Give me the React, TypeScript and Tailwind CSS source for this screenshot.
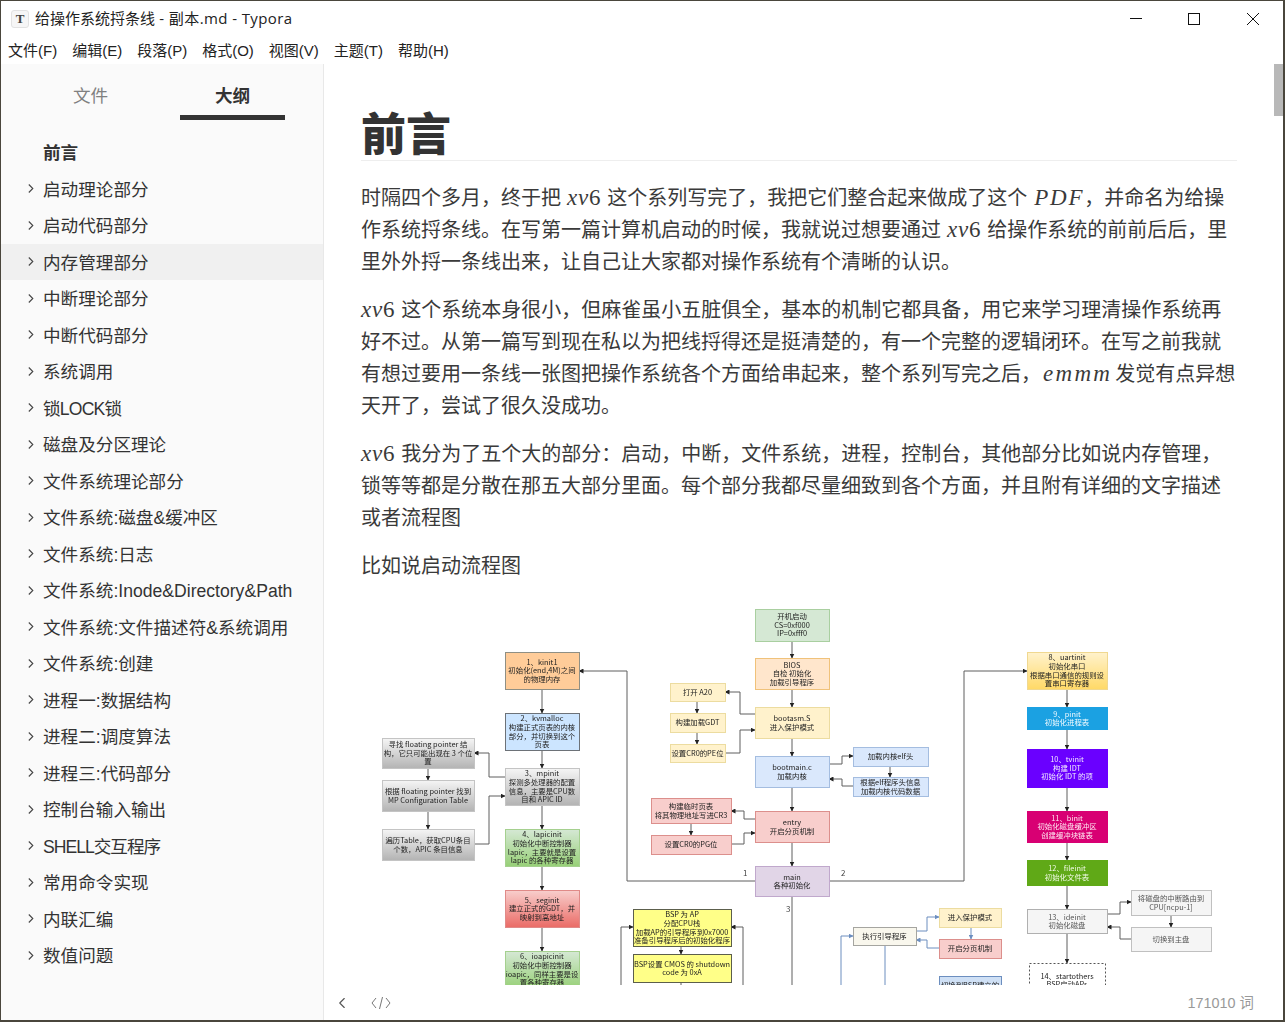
import { ChevronLeft } from 'lucide-react';

const OUTLINE = [
  '启动理论部分',
  '启动代码部分',
  '内存管理部分',
  '中断理论部分',
  '中断代码部分',
  '系统调用',
  '锁LOCK锁',
  '磁盘及分区理论',
  '文件系统理论部分',
  '文件系统:磁盘&缓冲区',
  '文件系统:日志',
  '文件系统:Inode&Directory&Path',
  '文件系统:文件描述符&系统调用',
  '文件系统:创建',
  '进程一:数据结构',
  '进程二:调度算法',
  '进程三:代码部分',
  '控制台输入输出',
  'SHELL交互程序',
  '常用命令实现',
  '内联汇编',
  '数值问题',
];

// capitals run narrower in the reference font
const TIGHT: Record<string, string> = {
  '锁LOCK锁': 'tracking-[-0.8px]',
  SHELL交互程序: 'tracking-[-1px]',
};

const MENU = ['文件(F)', '编辑(E)', '段落(P)', '格式(O)', '视图(V)', '主题(T)', '帮助(H)'];

type Box = {
  x: number;
  y: number;
  w: number;
  h: number;
  fill: string;
  stroke: string;
  lines: string[];
  color?: string;
  dashed?: boolean;
};

const BOXES: Box[] = [
  { x: 755, y: 609, w: 74, h: 32, fill: '#d5e8d4', stroke: '#a9cfa0', lines: ['开机启动', 'CS=0xf000', 'IP=0xfff0'] },
  { x: 755, y: 658, w: 74, h: 31, fill: '#ffe6cc', stroke: '#f0c27a', lines: ['BIOS', '自检 初始化', '加载引导程序'] },
  { x: 755, y: 707, w: 74, h: 31, fill: '#fff2cc', stroke: '#ecdca0', lines: ['bootasm.S', '进入保护模式'] },
  { x: 755, y: 756, w: 74, h: 31, fill: '#dae8fc', stroke: '#a4bde0', lines: ['bootmain.c', '加载内核'] },
  { x: 755, y: 811, w: 74, h: 31, fill: '#f8cecc', stroke: '#dc8f8c', lines: ['entry', '开启分页机制'] },
  { x: 755, y: 866, w: 74, h: 30, fill: '#e1d5e7', stroke: '#c0a8cc', lines: ['main', '各种初始化'] },
  { x: 670, y: 683, w: 55, h: 18, fill: '#fff2cc', stroke: '#ecdca0', lines: ['打开 A20'] },
  { x: 670, y: 713, w: 55, h: 19, fill: '#fff2cc', stroke: '#ecdca0', lines: ['构建加载GDT'] },
  { x: 670, y: 744, w: 55, h: 18, fill: '#fff2cc', stroke: '#ecdca0', lines: ['设置CR0的PE位'] },
  { x: 853, y: 747, w: 75, h: 19, fill: '#dae8fc', stroke: '#a4bde0', lines: ['加载内核elf头'] },
  { x: 853, y: 777, w: 75, h: 19, fill: '#dae8fc', stroke: '#a4bde0', lines: ['根据elf程序头信息', '加载内核代码数据'] },
  { x: 651, y: 798, w: 80, h: 25, fill: '#f8cecc', stroke: '#dc8f8c', lines: ['构建临时页表', '将其物理地址写进CR3'] },
  { x: 651, y: 835, w: 80, h: 19, fill: '#f8cecc', stroke: '#dc8f8c', lines: ['设置CR0的PG位'] },
  { x: 505, y: 652, w: 74, h: 37, fill: '#ffcc99', stroke: '#8f8f84', lines: ['1、kinit1', '初始化(end,4M)之间', '的物理内存'] },
  { x: 505, y: 713, w: 74, h: 37, fill: '#cce5ff', stroke: '#6d7278', lines: ['2、kvmalloc', '构建正式页表的内核', '部分，并切换到这个', '页表'] },
  { x: 505, y: 768, w: 74, h: 37, fill: 'url(#grey)', stroke: '#c4c4c4', lines: ['3、mpinit', '探测多处理器的配置', '信息，主要是CPU数', '目和 APIC ID'] },
  { x: 505, y: 829, w: 74, h: 37, fill: 'url(#green)', stroke: '#a5d08f', lines: ['4、lapicinit', '初始化中断控制器', 'lapic，主要就是设置', 'lapic 的各种寄存器'] },
  { x: 505, y: 890, w: 74, h: 37, fill: 'url(#red)', stroke: '#e08a88', lines: ['5、seginit', '建立正式的GDT，并', '映射到高地址'] },
  { x: 505, y: 951, w: 74, h: 37, fill: 'url(#green)', stroke: '#a5d08f', lines: ['6、ioapicinit', '初始化中断控制器', 'ioapic，同样主要是设', '置各种寄存器'] },
  { x: 382, y: 738, w: 92, h: 30, fill: 'url(#grey)', stroke: '#c4c4c4', lines: ['寻找 floating pointer 结', '构，它只可能出现在 3 个位', '置'] },
  { x: 382, y: 780, w: 92, h: 31, fill: 'url(#grey)', stroke: '#c4c4c4', lines: ['根据 floating pointer 找到', 'MP Configuration Table'] },
  { x: 382, y: 829, w: 92, h: 31, fill: 'url(#grey)', stroke: '#c4c4c4', lines: ['遍历Table，获取CPU条目', '个数，APIC 条目信息'] },
  { x: 633, y: 909, w: 98, h: 37, fill: '#ffff88', stroke: '#5c5f4c', lines: ['BSP 为 AP', '分配CPU栈', '加载AP的引导程序到0x7000', '准备引导程序后的初始化程序'] },
  { x: 633, y: 954, w: 98, h: 28, fill: '#ffff88', stroke: '#5c5f4c', lines: ['BSP设置 CMOS 的 shutdown', 'code 为 0xA'] },
  { x: 853, y: 927, w: 63, h: 18, fill: '#f9f7ed', stroke: '#a5a5a0', lines: ['执行引导程序'] },
  { x: 939, y: 908, w: 62, h: 19, fill: '#fff2cc', stroke: '#ecdca0', lines: ['进入保护模式'] },
  { x: 939, y: 939, w: 62, h: 19, fill: '#f8cecc', stroke: '#dc8f8c', lines: ['开启分页机制'] },
  { x: 939, y: 976, w: 62, h: 19, fill: '#cfe0f5', stroke: '#6c8ebf', lines: ['切换到BSP建立的'] },
  { x: 1027, y: 652, w: 80, h: 37, fill: 'url(#yellow)', stroke: '#f0d890', lines: ['8、uartinit', '初始化串口', '根据串口通信的规则设', '置串口寄存器'] },
  { x: 1027, y: 707, w: 80, h: 22, fill: '#1ba1e2', stroke: '#1ba1e2', color: '#f4fbff', lines: ['9、pinit', '初始化进程表'] },
  { x: 1027, y: 749, w: 80, h: 38, fill: '#6a00ff', stroke: '#6a00ff', color: '#f3ebff', lines: ['10、tvinit', '构建 IDT', '初始化 IDT 的项'] },
  { x: 1027, y: 811, w: 80, h: 31, fill: '#d80073', stroke: '#d80073', color: '#ffe6f2', lines: ['11、binit', '初始化磁盘缓冲区', '创建缓冲块链表'] },
  { x: 1027, y: 860, w: 80, h: 25, fill: '#60a917', stroke: '#60a917', color: '#f2fbe8', lines: ['12、fileinit', '初始化文件表'] },
  { x: 1027, y: 909, w: 80, h: 24, fill: '#f5f5f5', stroke: '#b0b0b0', color: '#555555', lines: ['13、ideinit', '初始化磁盘'] },
  { x: 1029, y: 963, w: 76, h: 34, fill: '#ffffff', stroke: '#555555', dashed: true, lines: ['14、startothers', 'BSP启动APs'] },
  { x: 1131, y: 890, w: 80, h: 25, fill: '#f5f5f5', stroke: '#c0c0c0', color: '#555555', lines: ['将磁盘的中断路由到', 'CPU[ncpu-1]'] },
  { x: 1131, y: 927, w: 80, h: 24, fill: '#f5f5f5', stroke: '#c0c0c0', color: '#555555', lines: ['切换到主盘'] },
];

type Edge = { p: string; color?: string; end?: boolean };

const GREY = '#5f5f5f';
const BLUE = '#6c8ebf';

const EDGES: Edge[] = [
  { p: '792,641 792,658' },
  { p: '792,689 792,707' },
  { p: '792,738 792,756' },
  { p: '792,787 792,811' },
  { p: '792,842 792,866' },
  { p: '792,896 792,990', end: false },
  { p: '755,714 740,714 740,692 725,692' },
  { p: '725,753 740,753 740,730 755,730' },
  { p: '697,701 697,713' },
  { p: '697,732 697,744' },
  { p: '829,764 842,764 842,756 853,756' },
  { p: '853,786 842,786 842,779 829,779' },
  { p: '890,766 890,777' },
  { p: '755,819 744,819 744,811 731,811' },
  { p: '731,844 744,844 744,833 755,833' },
  { p: '691,823 691,835' },
  { p: '755,881 627,881 627,671 579,671' },
  { p: '829,881 964,881 964,671 1027,671' },
  { p: '542,689 542,713' },
  { p: '542,750 542,768' },
  { p: '542,805 542,829' },
  { p: '542,866 542,890' },
  { p: '542,927 542,951' },
  { p: '505,777 489,777 489,753 474,753' },
  { p: '474,844 489,844 489,796 505,796' },
  { p: '428,768 428,780' },
  { p: '428,811 428,829' },
  { p: '1067,689 1067,707' },
  { p: '1067,729 1067,749' },
  { p: '1067,787 1067,811' },
  { p: '1067,842 1067,860' },
  { p: '1067,885 1067,909' },
  { p: '1067,933 1067,963' },
  { p: '1107,914 1120,914 1120,902 1131,902' },
  { p: '1131,939 1120,939 1120,927 1107,927' },
  { p: '1171,915 1171,927' },
  { p: '681,946 681,954' },
  { p: '681,982 681,990', end: false },
  { p: '621,990 621,927 633,927' },
  { p: '743,990 743,927 731,927' },
  { p: '841,990 841,936 853,936', color: BLUE },
  { p: '885,945 885,990', color: BLUE, end: false },
  { p: '916,931 927,931 927,917 939,917', color: BLUE },
  { p: '939,948 927,948 927,940 916,940', color: BLUE },
  { p: '971,927 971,939', color: BLUE },
];

const EDGE_LABELS = [
  { x: 743, y: 876, t: '1' },
  { x: 841, y: 876, t: '2' },
  { x: 786, y: 912, t: '3' },
];

function FlowChart() {
  return (
    <svg
      viewBox="361 600 876 390"
      width={876}
      height={390}
      className="block blur-[0.5px] font-['Noto_Sans_CJK_SC',sans-serif]"
    >
      <defs>
        <linearGradient id="grey" x1="0" y1="0" x2="0" y2="1">
          <stop offset="0" stopColor="#f5f5f5" />
          <stop offset="1" stopColor="#b3b3b3" />
        </linearGradient>
        <linearGradient id="green" x1="0" y1="0" x2="0" y2="1">
          <stop offset="0" stopColor="#d5e8d4" />
          <stop offset="1" stopColor="#97d077" />
        </linearGradient>
        <linearGradient id="red" x1="0" y1="0" x2="0" y2="1">
          <stop offset="0" stopColor="#f8cecc" />
          <stop offset="1" stopColor="#ea6b66" />
        </linearGradient>
        <linearGradient id="yellow" x1="0" y1="0" x2="0" y2="1">
          <stop offset="0" stopColor="#fff2cc" />
          <stop offset="1" stopColor="#ffd966" />
        </linearGradient>
        <marker id="arrow" markerWidth="5" markerHeight="5" refX="4.5" refY="2.5" orient="auto" markerUnits="userSpaceOnUse">
          <path d="M0,0 L5,2.5 L0,5 Z" fill="#222222" />
        </marker>
        <marker id="arrowBlue" markerWidth="5" markerHeight="5" refX="4.5" refY="2.5" orient="auto" markerUnits="userSpaceOnUse">
          <path d="M0,0 L5,2.5 L0,5 Z" fill={BLUE} />
        </marker>
      </defs>
      {EDGES.map((e) => (
        <polyline
          key={e.p}
          points={e.p}
          fill="none"
          stroke={e.color ?? GREY}
          strokeWidth={1}
          markerEnd={e.end === false ? undefined : e.color ? 'url(#arrowBlue)' : 'url(#arrow)'}
        />
      ))}
      {BOXES.map((b) => {
        const top = b.y + b.h / 2 - ((b.lines.length - 1) * 8.6) / 2 + 2.8;
        return (
          <g key={b.lines[0]}>
            <rect
              x={b.x + 0.5}
              y={b.y + 0.5}
              width={b.w}
              height={b.h}
              fill={b.fill}
              stroke={b.stroke}
              strokeDasharray={b.dashed ? '2 2' : undefined}
            />
            {b.lines.map((l, i) => (
              <text
                key={l}
                x={b.x + b.w / 2}
                y={top + i * 8.6}
                textAnchor="middle"
                fontSize={7.4}
                fill={b.color ?? '#222222'}
              >
                {l}
              </text>
            ))}
          </g>
        );
      })}
      {EDGE_LABELS.map((l) => (
        <text key={l.t} x={l.x} y={l.y} fontSize={8} fill="#444444">
          {l.t}
        </text>
      ))}
    </svg>
  );
}

// inline formula, spacing differs per occurrence so it comes in with the call
function M({ children, n, className }: { children: string; n?: string; className: string }) {
  return (
    <span className={`font-['Liberation_Serif',serif] text-[23px] leading-none ${className}`}>
      <span className="italic">{children}</span>
      {n}
    </span>
  );
}

function Chevron() {
  return (
    <svg width="6" height="9" viewBox="0 0 6 9" className="shrink-0" fill="none" stroke="#444444" strokeWidth="1.1">
      <path d="M0.8 0.5 L4.8 4.5 L0.8 8.5" />
    </svg>
  );
}

export default function App() {
  return (
    <div className="w-[1285px] h-[1022px] flex flex-col overflow-hidden bg-white border-t border-l border-b-2 border-r-2 border-[#4a463c] font-['Liberation_Sans','Noto_Sans_CJK_SC',sans-serif] text-[#333]">
      <div className="h-[35px] shrink-0 flex items-center pl-[10px]">
        <div className="w-[18px] h-[18px] rounded-[3px] border border-[#e2e2e2] bg-[#f6f6f6] flex items-center justify-center font-['Liberation_Serif',serif] font-bold text-[13px] text-[#444] leading-none">
          T
        </div>
        <span className="ml-[6px] font-['Open_Sans','Noto_Sans_CJK_SC',sans-serif] text-[15px] text-[#222] leading-none">
          给操作系统捋条线<span className="tracking-[0.4px]"> - 副本.md - Typora</span>
        </span>
        <div className="ml-auto flex items-center">
          <svg width="14" height="14" viewBox="0 0 14 14" className="mr-[44px]" fill="none" stroke="#111" strokeWidth="1">
            <path d="M1 6.5 H13" />
          </svg>
          <svg width="14" height="14" viewBox="0 0 14 14" className="mr-[45px]" fill="none" stroke="#111" strokeWidth="1">
            <rect x="1.5" y="1.5" width="11" height="11" />
          </svg>
          <svg width="14" height="14" viewBox="0 0 14 14" className="mr-[23px]" fill="none" stroke="#111" strokeWidth="1">
            <path d="M1 1 L13 13 M13 1 L1 13" />
          </svg>
        </div>
      </div>
      <div className="h-[28px] shrink-0 flex items-center gap-[15px] pl-[7px] pt-[3px] text-[15px] text-[#222]">
        {MENU.map((m) => (
          <span key={m}>{m}</span>
        ))}
      </div>
      <div className="flex-1 flex min-h-0">
        <aside className="w-[323px] shrink-0 bg-[#fafafa] border-r border-[#e8e8e8] flex flex-col">
          <div className="h-[56px] shrink-0 flex text-[17.6px]">
            <div className="w-[179px] pt-[18px] pl-[72px] text-[#808080] leading-[28px]">文件</div>
            <div className="w-[105px] h-[56px] border-b-[5px] border-[#333] pt-[18px] text-center font-bold leading-[28px]">大纲</div>
          </div>
          <div className="mt-[14px] text-[17.6px]">
            <div className="h-[36.5px] flex items-center pl-[42px] pt-[2px] font-bold">前言</div>
            {OUTLINE.map((t, i) => (
              <div
                key={t}
                className={
                  i === 2
                    ? 'h-[36.5px] flex items-center pl-[27px] gap-[9px] bg-[#f0f0f0] whitespace-nowrap'
                    : 'h-[36.5px] flex items-center pl-[27px] gap-[9px] whitespace-nowrap'
                }
              >
                <Chevron />
                <span className={`mt-[2px] ${TIGHT[t] ?? ''}`}>{t}</span>
              </div>
            ))}
          </div>
        </aside>
        <main className="flex-1 min-w-0 flex flex-col relative">
          <div className="absolute right-0 top-0 w-[9px] h-[52px] bg-[#b8b8b8]" />
          <div className="flex-1 min-h-0 overflow-hidden pl-[37px] pt-[47px]">
            <h1 className="w-[876px] h-[50px] border-b border-[#eee] text-[45px] font-black leading-[50px]">前言</h1>
            <div className="w-[890px] mt-[21px] text-[20px] leading-[32px] whitespace-nowrap text-[#3a3a3a]">
              <p>
                时隔四个多月，终于把<M n="6" className="mx-[6px] tracking-[0.8px]">xv</M>这个系列写完了，我把它们整合起来做成了这个<M className="ml-[7px] tracking-[1.7px]">PDF</M>，并命名为给操
                <br />
                作系统捋条线。在写第一篇计算机启动的时候，我就说过想要通过<M n="6" className="mx-[6px] tracking-[0.8px]">xv</M>给操作系统的前前后后，里
                <br />
                里外外捋一条线出来，让自己让大家都对操作系统有个清晰的认识。
              </p>
              <p className="mt-[16px]">
                <M n="6" className="mr-[6px] tracking-[0.8px]">xv</M>这个系统本身很小，但麻雀虽小五脏俱全，基本的机制它都具备，用它来学习理清操作系统再
                <br />
                好不过。从第一篇写到现在私以为把线捋得还是挺清楚的，有一个完整的逻辑闭环。在写之前我就
                <br />
                有想过要用一条线一张图把操作系统各个方面给串起来，整个系列写完之后，<M className="ml-[2px] mr-[3px] tracking-[2.3px]">emmm</M>发觉有点异想
                <br />
                天开了，尝试了很久没成功。
              </p>
              <p className="mt-[16px]">
                <M n="6" className="mr-[6px] tracking-[0.8px]">xv</M>我分为了五个大的部分：启动，中断，文件系统，进程，控制台，其他部分比如说内存管理，
                <br />
                锁等等都是分散在那五大部分里面。每个部分我都尽量细致到各个方面，并且附有详细的文字描述
                <br />
                或者流程图
              </p>
              <p className="mt-[16px]">比如说启动流程图</p>
            </div>
            <div className="mt-[18px]">
              <FlowChart />
            </div>
          </div>
          <div className="h-[35px] shrink-0 bg-white flex items-center pl-[9px] pr-[29px]">
            <ChevronLeft size={18} strokeWidth={1.5} color="#555" />
            <svg width="20" height="14" viewBox="0 0 20 14" className="ml-[20px]" fill="none" stroke="#777" strokeWidth="1">
              <path d="M5 2 L1 7 L5 12 M15 2 L19 7 L15 12 M11.5 1 L8.5 13" />
            </svg>
            <span className="ml-auto pt-[3px] text-[14.4px] text-[#999]">171010 词</span>
          </div>
        </main>
      </div>
    </div>
  );
}
